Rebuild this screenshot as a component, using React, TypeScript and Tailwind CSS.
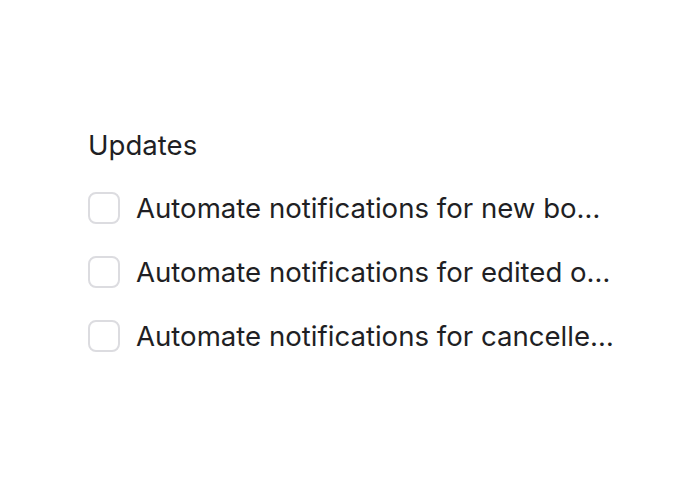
import React from 'react';

const items = [
  'Automate notifications for new bookings',
  'Automate notifications for edited or rescheduled bookings',
  'Automate notifications for cancelled bookings',
];

export default function App() {
  return (
    <div
      className="w-[700px] h-[480px] bg-white pl-[88px] pt-[125px] text-[#1f1f24]"
      style={{ fontFamily: 'Inter, "Noto Sans", sans-serif' }}
    >
      <h3 className="text-[27.6px] leading-[40px] font-normal">Updates</h3>
      <div className="mt-[27px] flex flex-col gap-[32px]">
        {items.map(label => (
          <label key={label} className="flex items-center gap-[16px] h-[32px]">
            <span className="w-[32px] h-[32px] shrink-0 rounded-[8px] border-2 border-[#dcdce0] bg-white" />
            <span className="text-[27.6px] leading-[36px] truncate w-[479px]">{label}</span>
          </label>
        ))}
      </div>
    </div>
  );
}
